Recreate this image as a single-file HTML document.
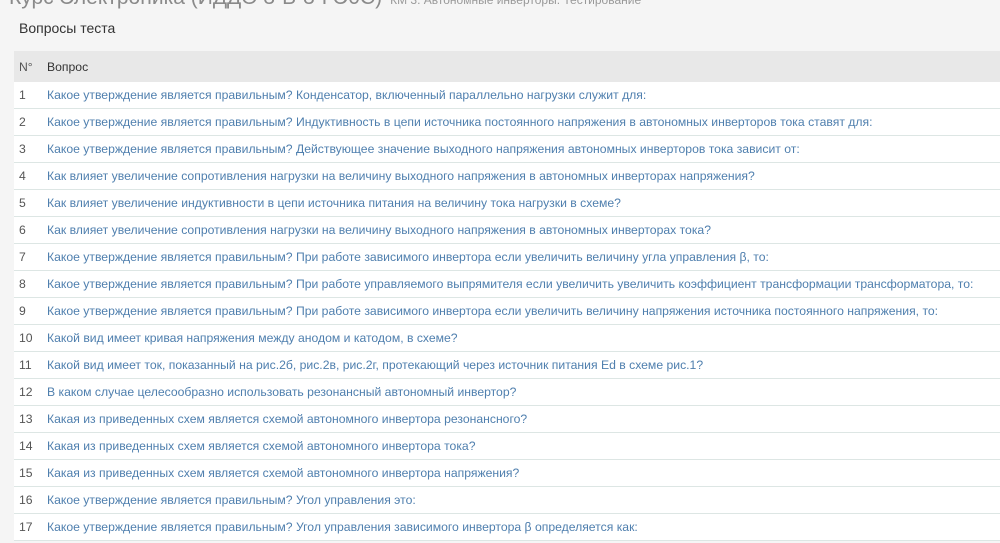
<!DOCTYPE html>
<html><head><meta charset="utf-8"><style>
body{margin:0;width:1000px;height:543px;overflow:hidden;background:#f5f5f5;font-family:"Liberation Sans",sans-serif;position:relative}
.t1{position:absolute;left:9px;top:-14px;font-size:21px;color:#8a8a8a;white-space:nowrap}
.t1 span{font-size:12px;margin-left:8px;color:#999}
.h{position:absolute;left:19px;top:20px;font-size:14px;color:#333}
table{position:absolute;left:14px;top:51px;width:986px;border-collapse:collapse;font-size:12.2px}
th{background:#e8e8e8;height:31px;text-align:left;font-weight:normal;color:#333;padding:0}
td{background:#fff;height:26px;border-bottom:1px solid #dde6e4;padding:0;white-space:nowrap}
td:first-child,th:first-child{width:28px;padding-left:5px;color:#555}
td a{color:#4f7fae;text-decoration:none}
</style></head><body>
<div class="t1">Курс Электроника (ИДДО 3-В-3-ГЭ0С)<span>КМ 3. Автономные инверторы. Тестирование</span></div>
<div class="h">Вопросы теста</div>
<table>
<tr><th>N°</th><th>Вопрос</th></tr>
<tr><td>1</td><td><a>Какое утверждение является правильным? Конденсатор, включенный параллельно нагрузки служит для:</a></td></tr>
<tr><td>2</td><td><a>Какое утверждение является правильным? Индуктивность в цепи источника постоянного напряжения в автономных инверторов тока ставят для:</a></td></tr>
<tr><td>3</td><td><a>Какое утверждение является правильным? Действующее значение выходного напряжения автономных инверторов тока зависит от:</a></td></tr>
<tr><td>4</td><td><a>Как влияет увеличение сопротивления нагрузки на величину выходного напряжения в автономных инверторах напряжения?</a></td></tr>
<tr><td>5</td><td><a>Как влияет увеличение индуктивности в цепи источника питания на величину тока нагрузки в схеме?</a></td></tr>
<tr><td>6</td><td><a>Как влияет увеличение сопротивления нагрузки на величину выходного напряжения в автономных инверторах тока?</a></td></tr>
<tr><td>7</td><td><a>Какое утверждение является правильным? При работе зависимого инвертора если увеличить величину угла управления β, то:</a></td></tr>
<tr><td>8</td><td><a>Какое утверждение является правильным? При работе управляемого выпрямителя если увеличить увеличить коэффициент трансформации трансформатора, то:</a></td></tr>
<tr><td>9</td><td><a>Какое утверждение является правильным? При работе зависимого инвертора если увеличить величину напряжения источника постоянного напряжения, то:</a></td></tr>
<tr><td>10</td><td><a>Какой вид имеет кривая напряжения между анодом и катодом, в схеме?</a></td></tr>
<tr><td>11</td><td><a>Какой вид имеет ток, показанный на рис.2б, рис.2в, рис.2г, протекающий через источник питания Ed в схеме рис.1?</a></td></tr>
<tr><td>12</td><td><a>В каком случае целесообразно использовать резонансный автономный инвертор?</a></td></tr>
<tr><td>13</td><td><a>Какая из приведенных схем является схемой автономного инвертора резонансного?</a></td></tr>
<tr><td>14</td><td><a>Какая из приведенных схем является схемой автономного инвертора тока?</a></td></tr>
<tr><td>15</td><td><a>Какая из приведенных схем является схемой автономного инвертора напряжения?</a></td></tr>
<tr><td>16</td><td><a>Какое утверждение является правильным? Угол управления это:</a></td></tr>
<tr><td>17</td><td><a>Какое утверждение является правильным? Угол управления зависимого инвертора β определяется как:</a></td></tr>
</table>
</body></html>
